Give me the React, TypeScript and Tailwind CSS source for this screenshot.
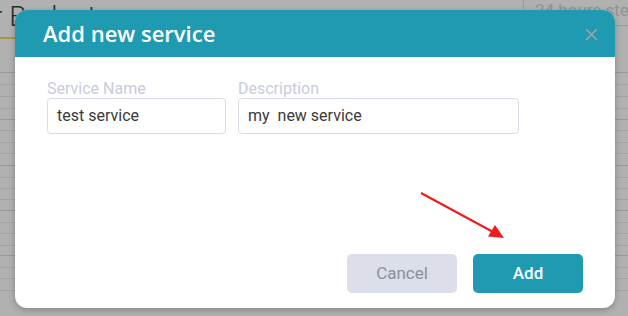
import React from "react";

const rowHeights = [12, 12, 12, 11, 11, 12, 11, 12, 12, 11, 11, 11, 12, 11, 12, 10, 12, 11, 12, 12];

export default function App() {
  return (
    <div
      className="relative w-[628px] h-[316px] overflow-hidden bg-[#b1b1b1]"
      style={{ fontFamily: "Roboto, 'Liberation Sans', sans-serif" }}
    >
      {/* background page */}
      <div className="flex flex-col">
        <div className="flex h-[72px]">
          <div className="w-[15px] flex flex-col">
            <div className="h-[37px]" />
            <div className="h-[2px] bg-[#9c9a3a]" />
          </div>
          <div className="flex-1 relative">
            <span className="absolute left-[-22px] top-[-4px] text-[28px] font-light text-[#2c2c2c] whitespace-nowrap">
              r Budget
            </span>
          </div>
          <div className="w-[105px] h-[26px] border-l border-b border-[#9c9c9c] pl-[11px] text-[17px] leading-[20px] font-normal text-[#939393] whitespace-nowrap overflow-hidden">
            24 hours step
          </div>
        </div>
        {rowHeights.map((h, i) => (
          <div
            key={i}
            className={i % 4 === 0 ? "border-t border-[#999999]" : "border-t border-[#a3a3a3]"}
            style={{ height: h }}
          />
        ))}
      </div>

      {/* modal */}
      <div className="absolute left-[15px] top-[10px] w-[600px] h-[298px] rounded-[12px] bg-white shadow-[0_2px_6px_rgba(0,0,0,0.25)] flex flex-col overflow-hidden">
        <div className="h-[47px] bg-[#1f9ab0] flex items-center justify-between pl-[28px] pr-[17px]">
          <span
            className="text-white text-[22px] font-semibold"
            style={{ fontFamily: "'Open Sans', 'Noto Sans', sans-serif" }}
          >
            Add new service
          </span>
          <svg width="13" height="13" viewBox="0 0 13 13" className="mt-[1px]">
            <path d="M1 1 L12 12 M12 1 L1 12" stroke="#9aa5a8" strokeWidth="1.6" />
          </svg>
        </div>
        <div className="relative flex-1 flex flex-col justify-between pt-[22px] pb-[15px] px-[32px]">
          <div className="flex gap-[12px]">
            <div className="flex flex-col w-[179px]">
              <label className="text-[16px] leading-[19px] text-[#c8cbdc]">Service Name</label>
              <div className="h-[36px] border border-[#d9dbe7] rounded-[4px] flex items-center px-[9px] text-[16px] text-[#3a3a3a]">
                test service
              </div>
            </div>
            <div className="flex flex-col w-[281px]">
              <label className="text-[16px] leading-[19px] text-[#c8cbdc]">Description</label>
              <div className="h-[36px] border border-[#d9dbe7] rounded-[4px] flex items-center px-[9px] text-[16px] text-[#3a3a3a] whitespace-pre">
                my  new service
              </div>
            </div>
          </div>
          <div className="flex justify-end gap-[16px]">
            <button className="w-[110px] h-[39px] rounded-[5px] bg-[#dcdee9] text-[#8b909c] text-[17px]">
              Cancel
            </button>
            <button className="w-[110px] h-[39px] rounded-[5px] bg-[#1f9ab0] text-white text-[17px] font-medium">
              Add
            </button>
          </div>
          <svg className="absolute left-0 top-0" width="600" height="241" viewBox="0 0 600 241">
            <line x1="406" y1="136" x2="480" y2="176" stroke="#ee1c1c" strokeWidth="2.2" />
            <polygon points="489,181 473,179.5 480,168" fill="#ee1c1c" />
          </svg>
        </div>
      </div>
    </div>
  );
}
